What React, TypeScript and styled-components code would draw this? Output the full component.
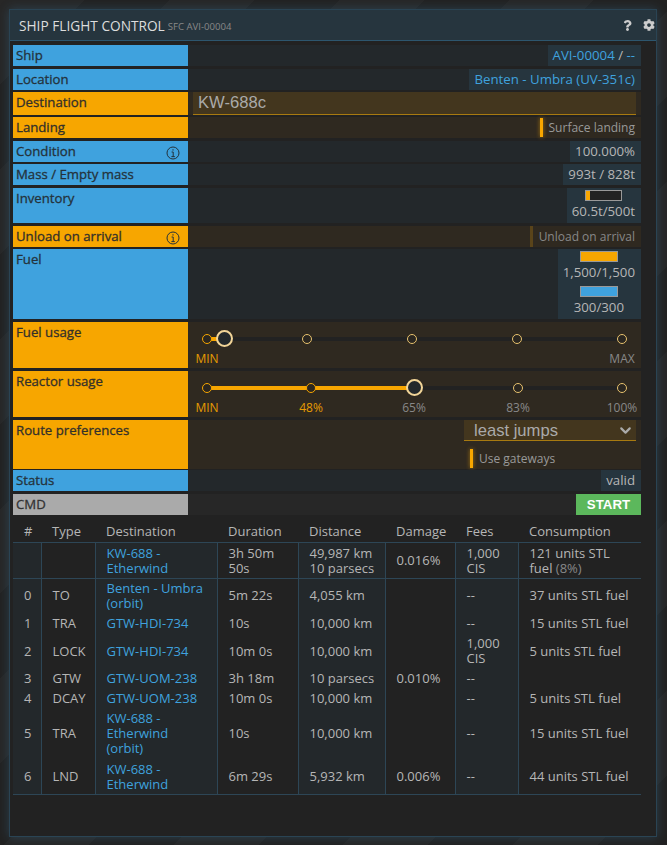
import React from 'react'
import styled, { createGlobalStyle } from 'styled-components'
import { FaCog, FaQuestion } from 'react-icons/fa'
import { FiChevronDown } from 'react-icons/fi'

const BLUE = '#3fa2de'
const ORANGE = '#f7a600'
const TEXT = '#b6b6b6'
const BODY_FONT = '"Open Sans", "Noto Sans", sans-serif'

const GlobalStyle = createGlobalStyle`
  * { box-sizing: border-box; }
  html, body { margin: 0; padding: 0; }
  body {
    height: 845px;
    overflow: hidden;
    background-color: #252525;
    background-image: repeating-linear-gradient(135deg, #272727 0 60px, #222222 60px 120px);
    font-family: ${BODY_FONT};
    font-size: 13px;
    color: ${TEXT};
  }
`

const Page = styled.div`
  padding: 9px 10px 8px 9px;
  height: 845px;
`

const Window = styled.div`
  height: 828px;
  display: flex;
  flex-direction: column;
  background: #222222;
  border: 1px solid #2a4454;
  box-shadow: 0 0 10px rgba(63, 140, 190, 0.28);
`

const Header = styled.header`
  height: 31px;
  flex: none;
  display: flex;
  align-items: center;
  padding: 0 1px 0 9px;
  background: #26353e;
  border-bottom: 1px solid #2d566e;
`

const Title = styled.span`
  font-size: 13.7px;
  color: #dddddd;
`

const SubTitle = styled.span`
  font-size: 9.6px;
  color: #888888;
  margin-left: 3px;
  margin-top: 2px;
`

const HeaderIcons = styled.div`
  margin-left: auto;
  display: flex;
  align-items: center;
  gap: 10px;
  color: #cccccc;
  font-size: 12px;
`

const Body = styled.div`
  padding: 4px 15px 0 3px;
  display: flex;
  flex-direction: column;
`

const Form = styled.div`
  display: flex;
  flex-direction: column;
  gap: 2.6px;
`

const Row = styled.div<{ $h: number }>`
  display: grid;
  grid-template-columns: 175px 1fr;
  height: ${(p) => p.$h}px;
`

const Label = styled.div<{ $tone: 'blue' | 'orange' | 'gray' }>`
  position: relative;
  padding: 0 3px;
  font-size: 13.2px;
  line-height: 21px;
  font-weight: 500;
  -webkit-text-stroke: 0.3px currentColor;
  background: ${(p) => (p.$tone === 'blue' ? BLUE : p.$tone === 'orange' ? ORANGE : '#aaaaaa')};
  color: ${(p) => (p.$tone === 'orange' ? '#33302a' : p.$tone === 'blue' ? '#24323b' : '#333333')};
`

const InfoMark = styled.svg`
  position: absolute;
  right: 8px;
  top: 5px;
  width: 14px;
  height: 14px;
`

const Value = styled.div<{ $edit?: boolean; $col?: boolean }>`
  display: flex;
  flex-direction: ${(p) => (p.$col ? 'column' : 'row')};
  justify-content: ${(p) => (p.$col ? 'flex-start' : 'flex-end')};
  align-items: ${(p) => (p.$col ? 'flex-end' : 'stretch')};
  background: ${(p) => (p.$edit ? '#2f2920' : '#23282b')};
  min-width: 0;
`

const CommandValue = styled(Value)`
  background: #272727;
`

const Chip = styled.div`
  display: flex;
  flex-direction: column;
  align-items: center;
  padding: 0 6px 0 5px;
  background: #26353e;
  font-size: 13.25px;
  line-height: 21px;
  white-space: nowrap;
`

const Link = styled.span`
  color: ${BLUE};
`

const TextInput = styled.input`
  width: 443px;
  height: 23px;
  margin-right: 5px;
  padding: 0 5px;
  border: 0;
  border-bottom: 1px solid #a87a10;
  outline: none;
  background: #43361e;
  color: #aaaaaa;
  font-family: "Liberation Sans", sans-serif;
  font-size: 16.6px;
`

const Toggle = styled.div<{ $on: boolean }>`
  display: flex;
  align-items: center;
  height: 21px;
  padding-right: 6px;
  font-size: 12px;
  color: ${(p) => (p.$on ? '#999999' : '#888888')};
  white-space: nowrap;

  &::before {
    content: '';
    width: 3px;
    align-self: stretch;
    margin: ${(p) => (p.$on ? '1px' : '0')} 6px ${(p) => (p.$on ? '1px' : '0')} 0;
    background: ${(p) => (p.$on ? ORANGE : '#5a441a')};
    box-shadow: ${(p) => (p.$on ? '0 0 4px rgba(247, 166, 0, 0.6)' : 'none')};
  }
`

const GatewayToggle = styled(Toggle)`
  width: 172px;
  margin: 7px 5px 0 0;
  padding-left: 6px;
  &::before {
    margin-right: 6px;
  }
`

const Gauge = styled.div<{ $w: number; $mt: number }>`
  width: ${(p) => p.$w}px;
  height: 11px;
  flex: none;
  margin-top: ${(p) => p.$mt}px;
  border: 1px solid #999999;
  background: #222222;
`

const GaugeFill = styled.div<{ $color: string; $pct: number }>`
  height: 100%;
  width: ${(p) => p.$pct}%;
  background: ${(p) => p.$color};
`

const SliderBox = styled.div`
  position: relative;
  height: 100%;
  background: #2f2920;
`

const Rail = styled.div`
  position: absolute;
  left: 19px;
  right: 19px;
  top: 15px;
  height: 4px;
  background: #222222;
`

const Track = styled.div<{ $w: number }>`
  position: absolute;
  left: 19px;
  top: 15px;
  height: 4px;
  width: ${(p) => p.$w}px;
  background: ${ORANGE};
`

const Dot = styled.div<{ $on: boolean; $at: number }>`
  position: absolute;
  top: 12px;
  left: ${(p) => p.$at}px;
  width: 10px;
  height: 10px;
  margin-left: -5px;
  border-radius: 50%;
  background: #2a2620;
  border: 1.5px solid ${(p) => (p.$on ? ORANGE : '#e8c26e')};
`

const Handle = styled.div<{ $at: number }>`
  position: absolute;
  top: 8px;
  left: ${(p) => p.$at}px;
  width: 17px;
  height: 17px;
  margin-left: -8.5px;
  border-radius: 50%;
  background: #23282b;
  border: 2px solid #f2d598;
`

const Mark = styled.span<{ $on: boolean; $at: number }>`
  position: absolute;
  top: 29px;
  left: ${(p) => p.$at}px;
  transform: translateX(-50%);
  font-size: 12px;
  line-height: 16px;
  color: ${(p) => (p.$on ? '#e69c00' : '#888888')};
`

const SelectBox = styled.div`
  width: 172px;
  height: 21px;
  flex: none;
  margin-right: 5px;
  padding: 1px 2px 0 10px;
  display: flex;
  align-items: center;
  justify-content: space-between;
  background: #43361e;
  border-bottom: 1px solid #a87a10;
  font-family: "Liberation Sans", sans-serif;
  font-size: 16.6px;
  color: #aaaaaa;
`

const StartButton = styled.button`
  width: 65px;
  height: 21px;
  padding: 0;
  border: 0;
  background: #5cb85c;
  color: #ffffff;
  font-family: "Liberation Sans", sans-serif;
  font-weight: 700;
  font-size: 13.3px;
`

const Table = styled.table`
  width: 628px;
  margin-top: 6px;
  border-collapse: collapse;
  table-layout: fixed;
  line-height: 15px;
  font-size: 13px;

  th {
    height: 22px;
    padding: 0 0 0 11px;
    font-weight: 400;
    text-align: left;
    border-bottom: 1px solid #2d4656;
  }

  td {
    padding: 0 11px 0 11px;
    vertical-align: middle;
    border-left: 1px solid #2d4656;
  }

  td:first-child {
    border-left: 0;
  }

  td:nth-child(odd) {
    background: #23282b;
  }

  tbody tr:first-child,
  tbody tr:last-child {
    border-bottom: 1px solid #2d4656;
  }
`

const Col = styled.col<{ $w: number }>`
  width: ${(p) => p.$w}px;
`

const TableRow = styled.tr<{ $h: number }>`
  height: ${(p) => p.$h}px;
`

const Tight = styled.td`
  && {
    padding-right: 0;
  }
`

const Dim = styled.span`
  color: #888888;
`

const InfoIcon = () => (
  <InfoMark viewBox="0 0 14 14" fill="none" stroke="#24323b" strokeWidth="1">
    <circle cx="7" cy="7" r="6" />
    <path d="M7 3.2v1.4M5.6 6h1.6v4.4M5.4 10.6h3.4" />
  </InfoMark>
)

type Stop = { at: number; label?: string; on: boolean; handle?: boolean }

const Slider = ({ stops, track }: { stops: Stop[]; track: number }) => (
  <SliderBox>
    <Rail />
    <Track $w={track} />
    {stops.map((s) => (s.handle ? <Handle key={s.at} $at={s.at} /> : <Dot key={s.at} $on={s.on} $at={s.at} />))}
    {stops.map((s) =>
      s.label ? (
        <Mark key={s.at} $on={s.on} $at={s.at}>
          {s.label}
        </Mark>
      ) : null
    )}
  </SliderBox>
)

const fuelStops: Stop[] = [
  { at: 19, label: 'MIN', on: true },
  { at: 36, on: true, handle: true },
  { at: 119, on: false },
  { at: 224, on: false },
  { at: 329, on: false },
  { at: 434, label: 'MAX', on: false },
]

const reactorStops: Stop[] = [
  { at: 19, label: 'MIN', on: true },
  { at: 123, label: '48%', on: true },
  { at: 226, label: '65%', on: false, handle: true },
  { at: 330, label: '83%', on: false },
  { at: 434, label: '100%', on: false },
]

const routes = [
  { h: 34, n: '0', type: 'TO', dest: 'Benten - Umbra (orbit)', dur: '5m 22s', dist: '4,055 km', dmg: '', fee: '--', use: '37 units STL fuel' },
  { h: 22, n: '1', type: 'TRA', dest: 'GTW-HDI-734', dur: '10s', dist: '10,000 km', dmg: '', fee: '--', use: '15 units STL fuel' },
  { h: 33, n: '2', type: 'LOCK', dest: 'GTW-HDI-734', dur: '10m 0s', dist: '10,000 km', dmg: '', fee: '1,000 CIS', use: '5 units STL fuel' },
  { h: 22, n: '3', type: 'GTW', dest: 'GTW-UOM-238', dur: '3h 18m', dist: '10 parsecs', dmg: '0.010%', fee: '--', use: '' },
  { h: 18, n: '4', type: 'DCAY', dest: 'GTW-UOM-238', dur: '10m 0s', dist: '10,000 km', dmg: '', fee: '--', use: '5 units STL fuel' },
  { h: 52, n: '5', type: 'TRA', dest: 'KW-688 - Etherwind (orbit)', dur: '10s', dist: '10,000 km', dmg: '', fee: '--', use: '15 units STL fuel' },
  { h: 35, n: '6', type: 'LND', dest: 'KW-688 - Etherwind', dur: '6m 29s', dist: '5,932 km', dmg: '0.006%', fee: '--', use: '44 units STL fuel' },
]

export default function App() {
  return (
    <>
      <GlobalStyle />
      <Page>
        <Window>
          <Header>
            <Title>SHIP FLIGHT CONTROL</Title>
            <SubTitle>SFC AVI-00004</SubTitle>
            <HeaderIcons>
              <FaQuestion size={11} />
              <FaCog size={12} />
            </HeaderIcons>
          </Header>
          <Body>
            <Form>
              <Row $h={21}>
                <Label $tone="blue">Ship</Label>
                <Value>
                  <Chip>
                    <span>
                      <Link>AVI-00004</Link> / <Link>--</Link>
                    </span>
                  </Chip>
                </Value>
              </Row>
              <Row $h={21}>
                <Label $tone="blue">Location</Label>
                <Value>
                  <Chip>
                    <Link>Benten - Umbra (UV-351c)</Link>
                  </Chip>
                </Value>
              </Row>
              <Row $h={22.5}>
                <Label $tone="orange">Destination</Label>
                <Value $edit>
                  <TextInput defaultValue="KW-688c" />
                </Value>
              </Row>
              <Row $h={21}>
                <Label $tone="orange">Landing</Label>
                <Value $edit>
                  <Toggle $on>Surface landing</Toggle>
                </Value>
              </Row>
              <Row $h={21}>
                <Label $tone="blue">
                  Condition
                  <InfoIcon />
                </Label>
                <Value>
                  <Chip>100.000%</Chip>
                </Value>
              </Row>
              <Row $h={21}>
                <Label $tone="blue">Mass / Empty mass</Label>
                <Value>
                  <Chip>993t / 828t</Chip>
                </Value>
              </Row>
              <Row $h={35.2}>
                <Label $tone="blue">Inventory</Label>
                <Value>
                  <Chip>
                    <Gauge $w={37} $mt={2}>
                      <GaugeFill $color={ORANGE} $pct={12} />
                    </Gauge>
                    60.5t/500t
                  </Chip>
                </Value>
              </Row>
              <Row $h={21}>
                <Label $tone="orange">
                  Unload on arrival
                  <InfoIcon />
                </Label>
                <Value $edit>
                  <Toggle $on={false}>Unload on arrival</Toggle>
                </Value>
              </Row>
              <Row $h={70}>
                <Label $tone="blue">Fuel</Label>
                <Value>
                  <Chip>
                    <Gauge $w={38} $mt={2}>
                      <GaugeFill $color={ORANGE} $pct={100} />
                    </Gauge>
                    1,500/1,500
                    <Gauge $w={38} $mt={3}>
                      <GaugeFill $color={BLUE} $pct={100} />
                    </Gauge>
                    300/300
                  </Chip>
                </Value>
              </Row>
              <Row $h={46.4}>
                <Label $tone="orange">Fuel usage</Label>
                <Slider stops={fuelStops} track={17} />
              </Row>
              <Row $h={46.4}>
                <Label $tone="orange">Reactor usage</Label>
                <Slider stops={reactorStops} track={207} />
              </Row>
              <Row $h={47.5}>
                <Label $tone="orange">Route preferences</Label>
                <Value $edit $col>
                  <SelectBox>
                    least jumps
                    <FiChevronDown size={17} strokeWidth={3} />
                  </SelectBox>
                  <GatewayToggle $on>Use gateways</GatewayToggle>
                </Value>
              </Row>
              <Row $h={21}>
                <Label $tone="blue">Status</Label>
                <Value>
                  <Chip>valid</Chip>
                </Value>
              </Row>
              <Row $h={21}>
                <Label $tone="gray">CMD</Label>
                <CommandValue>
                  <StartButton>START</StartButton>
                </CommandValue>
              </Row>
            </Form>
            <Table>
              <colgroup>
                <Col $w={28} />
                <Col $w={54} />
                <Col $w={122} />
                <Col $w={81} />
                <Col $w={87} />
                <Col $w={70} />
                <Col $w={63} />
                <Col $w={123} />
              </colgroup>
              <thead>
                <tr>
                  <th>#</th>
                  <th>Type</th>
                  <th>Destination</th>
                  <th>Duration</th>
                  <th>Distance</th>
                  <th>Damage</th>
                  <th>Fees</th>
                  <th>Consumption</th>
                </tr>
              </thead>
              <tbody>
                <TableRow $h={36}>
                  <td />
                  <td />
                  <td>
                    <Link>KW-688 - Etherwind</Link>
                  </td>
                  <td>3h 50m 50s</td>
                  <Tight>
                    49,987 km
                    <br />
                    10 parsecs
                  </Tight>
                  <td>0.016%</td>
                  <td>1,000 CIS</td>
                  <td>
                    121 units STL fuel <Dim>(8%)</Dim>
                  </td>
                </TableRow>
                {routes.map((r) => (
                  <TableRow key={r.n} $h={r.h}>
                    <td>{r.n}</td>
                    <Tight>{r.type}</Tight>
                    <td>
                      <Link>{r.dest}</Link>
                    </td>
                    <td>{r.dur}</td>
                    <Tight>{r.dist}</Tight>
                    <td>{r.dmg}</td>
                    <td>{r.fee}</td>
                    <Tight>{r.use}</Tight>
                  </TableRow>
                ))}
              </tbody>
            </Table>
          </Body>
        </Window>
      </Page>
    </>
  )
}
